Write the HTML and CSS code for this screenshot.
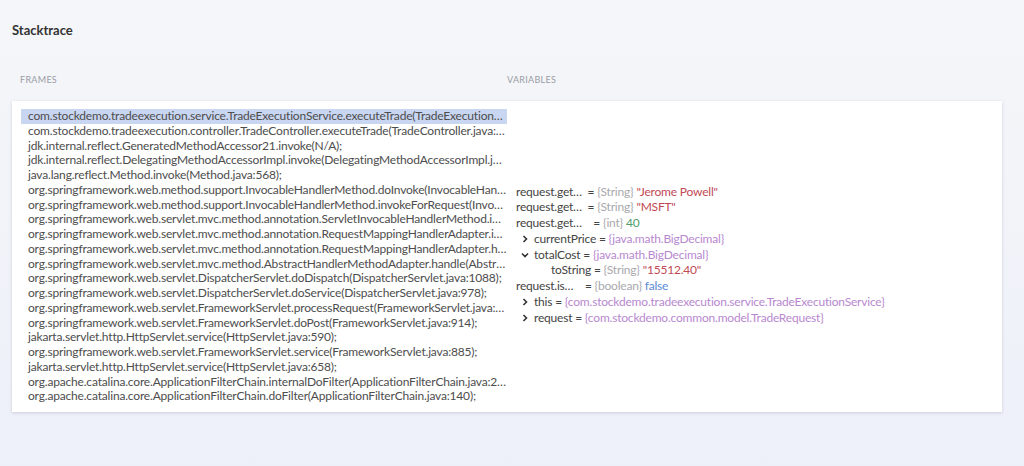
FILE: index.html
```html
<!DOCTYPE html>
<html lang="en">

<head>
    <meta charset="UTF-8" />
    <meta name="viewport" content="width=device-width, initial-scale=1" />
    <title>Stacktrace</title>
    <link rel="stylesheet" href="styles.css">
</head>

<body>
    <main class="page">
        <h1 class="title">Stacktrace</h1>

        <div class="headers">
            <div class="label frames-label">FRAMES</div>
            <div class="label vars-label">VARIABLES</div>
        </div>

        <!-- Debugger panel -->
        <section class="panel">
            <ul class="frames">
                <li class="frame active">com.stockdemo.tradeexecution.service.TradeExecutionService.executeTrade(TradeExecutionService.java:42);</li>
                <li class="frame">com.stockdemo.tradeexecution.controller.TradeController.executeTrade(TradeController.java:31);</li>
                <li class="frame">jdk.internal.reflect.GeneratedMethodAccessor21.invoke(N/A);</li>
                <li class="frame">jdk.internal.reflect.DelegatingMethodAccessorImpl.invoke(DelegatingMethodAccessorImpl.java:43);</li>
                <li class="frame">java.lang.reflect.Method.invoke(Method.java:568);</li>
                <li class="frame">org.springframework.web.method.support.InvocableHandlerMethod.doInvoke(InvocableHandlerMethod.java:205);</li>
                <li class="frame">org.springframework.web.method.support.InvocableHandlerMethod.invokeForRequest(InvocableHandlerMethod.java:150);</li>
                <li class="frame">org.springframework.web.servlet.mvc.method.annotation.ServletInvocableHandlerMethod.invokeAndHandle(ServletInvocableHandlerMethod.java:118);</li>
                <li class="frame">org.springframework.web.servlet.mvc.method.annotation.RequestMappingHandlerAdapter.invokeHandlerMethod(RequestMappingHandlerAdapter.java:884);</li>
                <li class="frame">org.springframework.web.servlet.mvc.method.annotation.RequestMappingHandlerAdapter.handleInternal(RequestMappingHandlerAdapter.java:797);</li>
                <li class="frame">org.springframework.web.servlet.mvc.method.AbstractHandlerMethodAdapter.handle(AbstractHandlerMethodAdapter.java:87);</li>
                <li class="frame">org.springframework.web.servlet.DispatcherServlet.doDispatch(DispatcherServlet.java:1088);</li>
                <li class="frame">org.springframework.web.servlet.DispatcherServlet.doService(DispatcherServlet.java:978);</li>
                <li class="frame">org.springframework.web.servlet.FrameworkServlet.processRequest(FrameworkServlet.java:1011);</li>
                <li class="frame">org.springframework.web.servlet.FrameworkServlet.doPost(FrameworkServlet.java:914);</li>
                <li class="frame">jakarta.servlet.http.HttpServlet.service(HttpServlet.java:590);</li>
                <li class="frame">org.springframework.web.servlet.FrameworkServlet.service(FrameworkServlet.java:885);</li>
                <li class="frame">jakarta.servlet.http.HttpServlet.service(HttpServlet.java:658);</li>
                <li class="frame">org.apache.catalina.core.ApplicationFilterChain.internalDoFilter(ApplicationFilterChain.java:205);</li>
                <li class="frame">org.apache.catalina.core.ApplicationFilterChain.doFilter(ApplicationFilterChain.java:140);</li>
            </ul>

            <div class="variables">
                <ul class="var-list">
                    <li class="var">request.get…&nbsp; = <span class="type">{String}</span> <span class="str">"Jerome Powell"</span></li>
                    <li class="var">request.get…&nbsp; = <span class="type">{String}</span> <span class="str">"MSFT"</span></li>
                    <li class="var">request.get…&nbsp;&nbsp;&nbsp; = <span class="type">{int}</span> <span class="num">40</span></li>
                    <li class="var child"><svg class="chev" viewBox="0 0 8 8"><path d="M2.5 1 L5.5 4 L2.5 7" /></svg>currentPrice = <span class="obj">{java.math.BigDecimal}</span></li>
                    <li class="var child"><svg class="chev" viewBox="0 0 8 8"><path d="M1 2.5 L4 5.5 L7 2.5" /></svg>totalCost = <span class="obj">{java.math.BigDecimal}</span></li>
                    <li class="var grandchild">toString = <span class="type">{String}</span> <span class="str">"15512.40"</span></li>
                    <li class="var">request.is…&nbsp;&nbsp;&nbsp; = <span class="type">{boolean}</span> <span class="bool">false</span></li>
                    <li class="var child"><svg class="chev" viewBox="0 0 8 8"><path d="M2.5 1 L5.5 4 L2.5 7" /></svg>this = <span class="obj">{com.stockdemo.tradeexecution.service.TradeExecutionService}</span></li>
                    <li class="var child"><svg class="chev" viewBox="0 0 8 8"><path d="M2.5 1 L5.5 4 L2.5 7" /></svg>request = <span class="obj">{com.stockdemo.common.model.TradeRequest}</span></li>
                </ul>
            </div>
        </section>
    </main>
</body>

</html>
```

FILE: styles.css
```css
/* Reset & Global Styles */
* {
    margin: 0;
    padding: 0;
    box-sizing: border-box;
}

body {
    background: linear-gradient(180deg, #f5f6f9, #edf0f9);
    font-family: 'Lato', 'Noto Sans', sans-serif;
    color: #4d4d4d;
    min-height: 100vh;
    overflow: hidden;
}

.page {
    padding: 21px 22px 0 12px;
}

.title {
    font-size: 13px;
    font-weight: 700;
    color: #333;
    line-height: 18px;
}

/* Column headers */
.headers {
    display: flex;
    margin-top: 35px;
    height: 27px;
}

.label {
    font-size: 9px;
    letter-spacing: 0.3px;
    color: #9a9ca3;
    line-height: 12px;
}

.frames-label {
    width: 495px;
    padding-left: 8px;
}

/* Panel */
.panel {
    display: flex;
    background: #fff;
    height: 311px;
    box-shadow: 0 1px 3px rgba(40, 50, 80, 0.18);
    padding: 8px 0 0 9px;
}

ul {
    list-style: none;
}

.frames {
    width: 486px;
    flex-shrink: 0;
}

.frame {
    font-size: 12px;
    letter-spacing: -0.18px;
    line-height: 14.75px;
    padding-left: 7px;
    white-space: nowrap;
    overflow: hidden;
    text-overflow: ellipsis;
}

.frame.active {
    background: #c9d6f1;
}

/* Variables */
.variables {
    flex: 1;
    display: flex;
    align-items: center;
    padding-left: 9px;
    margin-top: -12px;
}

.var {
    font-size: 12px;
    letter-spacing: -0.2px;
    line-height: 15.75px;
    white-space: nowrap;
    color: #444;
}

.var.child {
    padding-left: 5px;
}

.var.grandchild {
    padding-left: 35px;
}

.chev {
    width: 8px;
    height: 8px;
    margin-right: 5px;
    fill: none;
    stroke: #333;
    stroke-width: 1.6;
}

.type {
    color: #a9a9ad;
}

.str {
    color: #bf4a55;
}

.num {
    color: #4f9c6c;
}

.bool {
    color: #5a8bd6;
}

.obj {
    color: #b888cf;
}
```
